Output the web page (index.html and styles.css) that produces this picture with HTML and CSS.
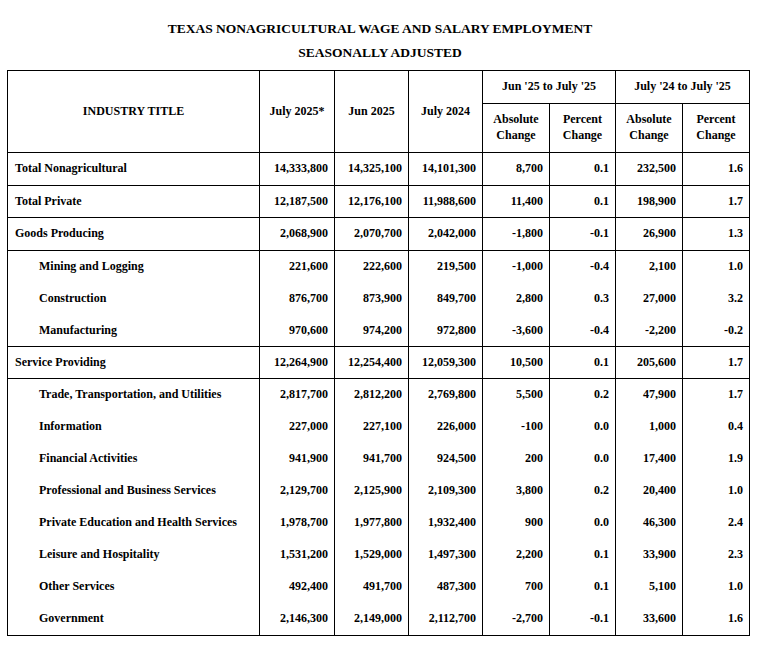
FILE: index.html
```html
<!DOCTYPE html>
<html>
<head>
<meta charset="utf-8">
<link rel="stylesheet" href="styles.css">
</head>
<body>
<div class="titles">
  <div class="title">TEXAS NONAGRICULTURAL WAGE AND SALARY EMPLOYMENT</div>
  <div class="title">SEASONALLY ADJUSTED</div>
</div>
<table class="emp">
  <colgroup>
    <col class="c1"><col class="c2"><col class="c3"><col class="c4"><col class="c5"><col class="c6"><col class="c7"><col class="c8">
  </colgroup>
  <thead>
    <tr class="h1">
      <th rowspan="2" class="b">INDUSTRY TITLE</th>
      <th rowspan="2" class="b">July 2025*</th>
      <th rowspan="2" class="b">Jun 2025</th>
      <th rowspan="2" class="b">July 2024</th>
      <th colspan="2" class="b">Jun '25 to July '25</th>
      <th colspan="2" class="b">July '24 to July '25</th>
    </tr>
    <tr class="h2">
      <th class="b">Absolute<br>Change</th>
      <th class="b">Percent<br>Change</th>
      <th class="b">Absolute<br>Change</th>
      <th class="b">Percent<br>Change</th>
    </tr>
  </thead>
  <tbody>
    <tr class="r33 b"><td>Total Nonagricultural</td><td>14,333,800</td><td>14,325,100</td><td>14,101,300</td><td>8,700</td><td>0.1</td><td>232,500</td><td>1.6</td></tr>
    <tr class="r32 b"><td>Total Private</td><td>12,187,500</td><td>12,176,100</td><td>11,988,600</td><td>11,400</td><td>0.1</td><td>198,900</td><td>1.7</td></tr>
    <tr class="r33 b"><td>Goods Producing</td><td>2,068,900</td><td>2,070,700</td><td>2,042,000</td><td>-1,800</td><td>-0.1</td><td>26,900</td><td>1.3</td></tr>
    <tr class="r32 sub"><td>Mining and Logging</td><td>221,600</td><td>222,600</td><td>219,500</td><td>-1,000</td><td>-0.4</td><td>2,100</td><td>1.0</td></tr>
    <tr class="r32 sub"><td>Construction</td><td>876,700</td><td>873,900</td><td>849,700</td><td>2,800</td><td>0.3</td><td>27,000</td><td>3.2</td></tr>
    <tr class="r32 sub b"><td>Manufacturing</td><td>970,600</td><td>974,200</td><td>972,800</td><td>-3,600</td><td>-0.4</td><td>-2,200</td><td>-0.2</td></tr>
    <tr class="r32 b"><td>Service Providing</td><td>12,264,900</td><td>12,254,400</td><td>12,059,300</td><td>10,500</td><td>0.1</td><td>205,600</td><td>1.7</td></tr>
    <tr class="r32 sub"><td>Trade, Transportation, and Utilities</td><td>2,817,700</td><td>2,812,200</td><td>2,769,800</td><td>5,500</td><td>0.2</td><td>47,900</td><td>1.7</td></tr>
    <tr class="r32 sub"><td>Information</td><td>227,000</td><td>227,100</td><td>226,000</td><td>-100</td><td>0.0</td><td>1,000</td><td>0.4</td></tr>
    <tr class="r32 sub"><td>Financial Activities</td><td>941,900</td><td>941,700</td><td>924,500</td><td>200</td><td>0.0</td><td>17,400</td><td>1.9</td></tr>
    <tr class="r32 sub"><td>Professional and Business Services</td><td>2,129,700</td><td>2,125,900</td><td>2,109,300</td><td>3,800</td><td>0.2</td><td>20,400</td><td>1.0</td></tr>
    <tr class="r32 sub"><td>Private Education and Health Services</td><td>1,978,700</td><td>1,977,800</td><td>1,932,400</td><td>900</td><td>0.0</td><td>46,300</td><td>2.4</td></tr>
    <tr class="r32 sub"><td>Leisure and Hospitality</td><td>1,531,200</td><td>1,529,000</td><td>1,497,300</td><td>2,200</td><td>0.1</td><td>33,900</td><td>2.3</td></tr>
    <tr class="r32 sub"><td>Other Services</td><td>492,400</td><td>491,700</td><td>487,300</td><td>700</td><td>0.1</td><td>5,100</td><td>1.0</td></tr>
    <tr class="r33 sub b"><td>Government</td><td>2,146,300</td><td>2,149,000</td><td>2,112,700</td><td>-2,700</td><td>-0.1</td><td>33,600</td><td>1.6</td></tr>
  </tbody>
</table>
</body>
</html>
```

FILE: styles.css
```css
html, body {
  margin: 0;
  padding: 0;
  background: #fff;
}
body {
  font-family: "Liberation Serif", "Times New Roman", serif;
  font-weight: bold;
  color: #000;
}
.titles {
  padding-top: 17px;
  margin-bottom: 5px;
  text-align: center;
}
.title {
  font-size: 13.5px;
  line-height: 24px;
}
.emp {
  margin-left: 7px;
  border-collapse: separate;
  border-spacing: 0;
  border-left: 1px solid #000;
  border-top: 1px solid #000;
  table-layout: fixed;
  width: 743px;
  font-size: 12px;
  line-height: 16px;
}
.c1 { width: 252px; }
.c2 { width: 75px; }
.c3 { width: 74px; }
.c4 { width: 74px; }
.c5 { width: 67px; }
.c6 { width: 66px; }
.c7 { width: 67px; }
.c8 { width: 67px; }
.emp th, .emp td {
  box-sizing: border-box;
  border-right: 1px solid #000;
  padding: 0 0 2px 0;
  vertical-align: middle;
  white-space: nowrap;
}
.emp th {
  text-align: center;
  font-weight: bold;
}
.emp th.b { border-bottom: 1px solid #000; }
.h1 th { height: 33px; }
.h2 th { height: 49px; }
.emp td {
  text-align: right;
  padding-right: 6px;
}
.emp td:first-child {
  text-align: left;
  padding-left: 7px;
  padding-right: 0;
}
.emp tr.sub td:first-child { padding-left: 31px; }
.emp tr.b td { border-bottom: 1px solid #000; }
.r32 td { height: 32px; }
.r33 td { height: 33px; }
```
